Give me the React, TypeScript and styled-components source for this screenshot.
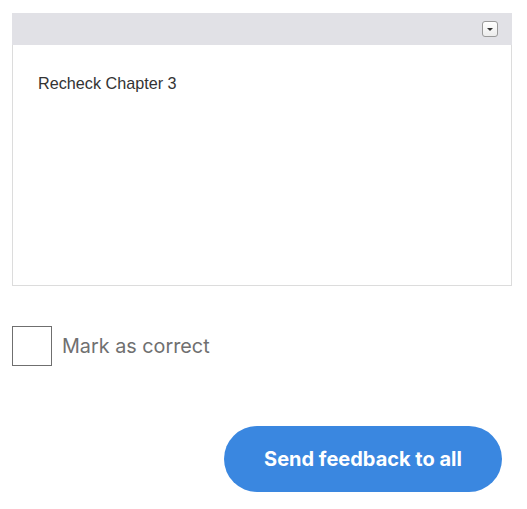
import React, { useState } from "react";
import styled, { createGlobalStyle } from "styled-components";

const GlobalStyle = createGlobalStyle`
  body {
    margin: 0;
    background: #ffffff;
    font-family: "Liberation Sans", Arial, sans-serif;
  }
`;

const Page = styled.div`
  padding: 13px 15px 0 12px;
  display: flex;
  flex-direction: column;
`;

const Editor = styled.div`
  width: 500px;
  box-sizing: border-box;
  border: 1px solid #dcdcdc;
  display: flex;
  flex-direction: column;
`;

const Toolbar = styled.div`
  height: 32px;
  background: #e1e1e6;
  display: flex;
  align-items: center;
  justify-content: flex-end;
  padding-right: 14px;
  margin: -1px -1px 0 -1px;
`;

const ToggleBtn = styled.button`
  width: 16px;
  height: 16px;
  padding: 0;
  border: 1px solid #9a9a9a;
  border-radius: 3px;
  background: linear-gradient(#ffffff, #ececec);
  display: flex;
  align-items: center;
  justify-content: center;
  cursor: pointer;
`;

const EditArea = styled.div`
  height: 240px;
  padding: 29px 25px;
  box-sizing: border-box;
  font-size: 16.2px;
  color: #333333;
  outline: none;
`;

const CheckRow = styled.label`
  margin-top: 40px;
  display: flex;
  align-items: center;
  gap: 10px;
  cursor: pointer;
`;

const CheckBox = styled.span<{ checked: boolean }>`
  width: 40px;
  height: 40px;
  box-sizing: border-box;
  border: 1px solid #6f6f6f;
  background: ${(p) => (p.checked ? "#3a87e0" : "#ffffff")};
`;

const CheckLabel = styled.span`
  font-family: Inter, "Liberation Sans", sans-serif;
  font-size: 19.8px;
  color: #707070;
`;

const Footer = styled.div`
  margin-top: 60px;
  display: flex;
  justify-content: flex-end;
  width: 500px;
  padding-right: 10px;
  box-sizing: border-box;
`;

const SendButton = styled.button`
  width: 278px;
  height: 66px;
  border: none;
  border-radius: 33px;
  background: #3a87e0;
  color: #ffffff;
  font-family: Inter, "Liberation Sans", sans-serif;
  font-weight: 700;
  font-size: 20px;
  cursor: pointer;
`;

export default function App() {
  const [checked, setChecked] = useState(false);
  return (
    <>
      <GlobalStyle />
      <Page>
        <Editor>
          <Toolbar>
            <ToggleBtn>
              <svg width="8" height="5" viewBox="0 0 8 5">
                <path d="M1 1h6L4 4z" fill="#333" />
              </svg>
            </ToggleBtn>
          </Toolbar>
          <EditArea contentEditable suppressContentEditableWarning>
            Recheck Chapter 3
          </EditArea>
        </Editor>
        <CheckRow onClick={() => setChecked(!checked)}>
          <CheckBox checked={checked} />
          <CheckLabel>Mark as correct</CheckLabel>
        </CheckRow>
        <Footer>
          <SendButton>Send feedback to all</SendButton>
        </Footer>
      </Page>
    </>
  );
}
